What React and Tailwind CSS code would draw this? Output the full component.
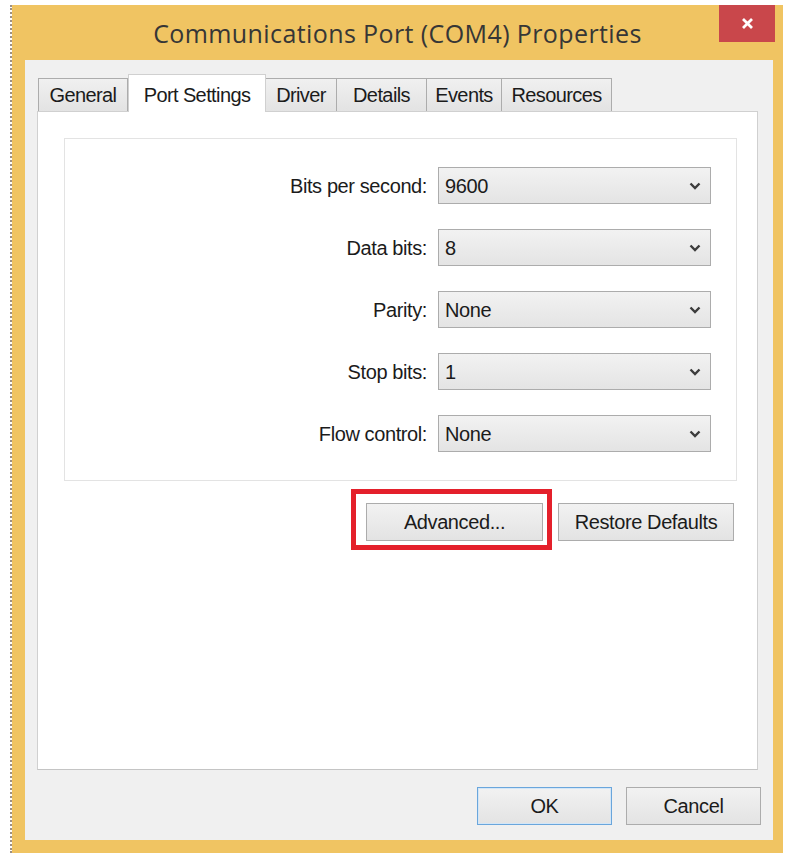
import React from 'react';

const tabs = [
  { name: 'General', w: 'w-[90px]' },
  { name: 'Port Settings', w: 'w-[138px]', active: true },
  { name: 'Driver', w: 'w-[72px]' },
  { name: 'Details', w: 'w-[91px]' },
  { name: 'Events', w: 'w-[76px]' },
  { name: 'Resources', w: 'w-[111px]' },
];

const settings = [
  { label: 'Bits per second:', value: '9600' },
  { label: 'Data bits:', value: '8' },
  { label: 'Parity:', value: 'None' },
  { label: 'Stop bits:', value: '1' },
  { label: 'Flow control:', value: 'None' },
];

const font = { fontFamily: '"Liberation Sans", Arial, sans-serif' };

function Chevron() {
  return (
    <svg width="12" height="8" viewBox="0 0 12 8" className="text-[#3c3c3c]">
      <polyline points="1.5,1.5 6,6 10.5,1.5" fill="none" stroke="currentColor" strokeWidth="2.4" />
    </svg>
  );
}

function Combo({ value }) {
  return (
    <div className="w-[273px] h-[37px] flex items-center justify-between pl-[6px] pr-[9px] border border-[#acacac] bg-gradient-to-b from-[#f2f2f2] to-[#e4e4e4] text-[20px] tracking-[-0.4px] text-[#1b1b1b]">
      <span>{value}</span>
      <Chevron />
    </div>
  );
}

function Button({ children, className = '', focused }) {
  return (
    <div
      className={`relative h-[38px] flex items-center justify-center border bg-gradient-to-b from-[#f2f2f2] to-[#e3e3e3] text-[20px] tracking-[-0.4px] text-[#1b1b1b] ${
        focused ? 'border-[#6aa6dc] shadow-[inset_0_0_0_1px_#d3e6f7]' : 'border-[#acacac]'
      } ${className}`}
    >
      {children}
    </div>
  );
}

export default function App() {
  return (
    <div className="w-[787px] h-[856px] bg-white flex pt-[5px]" style={font}>
      {/* strip of the desktop behind the dialog */}
      <div className="w-[10px]" />
      <div className="w-[2px] h-[848px] border-l-2 border-dotted border-[#9c8f84]" />

      <div className="w-[771px] h-[848px] bg-[#f0c462] flex flex-col">
        {/* title bar */}
        <div className="relative h-[55px] flex items-center justify-center">
          <span
            className="text-[25px] tracking-[0.4px] text-[#363636] pt-[2px]"
            style={{ fontFamily: '"Open Sans", "Noto Sans", sans-serif' }}
          >
            Communications Port (COM4) Properties
          </span>
          <div className="absolute top-0 right-[8px] w-[56px] h-[37px] bg-[#c9474b] flex items-center justify-center">
            <svg width="13" height="13" viewBox="0 0 13 13">
              <path d="M2 2 L11 11 M11 2 L2 11" stroke="#fff" strokeWidth="2.8" />
            </svg>
          </div>
        </div>

        {/* client area */}
        <div className="flex-1 ml-[13px] mr-[10px] mb-[13px] bg-[#f0f0f0] flex flex-col pt-[14px]">
          {/* tab strip */}
          <div className="flex items-end h-[37px] pl-[13px]">
            {tabs.map((t) =>
              t.active ? (
                <div
                  key={t.name}
                  className={`${t.w} h-[38px] -mb-px relative z-10 bg-white border border-b-0 border-[#d0d0d0] flex items-start justify-center pt-[5px] text-[20px] tracking-[-0.6px] text-[#1b1b1b]`}
                >
                  {t.name}
                </div>
              ) : (
                <div
                  key={t.name}
                  className={`${t.w} h-[33px] -ml-px first:ml-0 bg-gradient-to-b from-[#f0f0f0] to-[#e3e3e3] border border-b-0 border-[#acacac] flex items-center justify-center text-[20px] tracking-[-0.6px] text-[#1b1b1b]`}
                >
                  {t.name}
                </div>
              )
            )}
          </div>

          {/* tab page */}
          <div className="ml-[12px] w-[721px] h-[659px] bg-white border border-[#d0d0d0] border-b-[#c4c4c4]">
            <div className="mt-[26px] ml-[26px] w-[673px] border border-[#e3e3e3] pt-[28px] pb-[28px] pr-[25px] flex flex-col gap-[25px]">
              {settings.map((s) => (
                <div key={s.label} className="flex items-center justify-end gap-[11px]">
                  <span className="text-[20px] tracking-[-0.4px] text-[#1b1b1b]">{s.label}</span>
                  <Combo value={s.value} />
                </div>
              ))}
            </div>

            <div className="mt-[22px] flex justify-end gap-[15px] pr-[23px]">
              <Button className="w-[177px]">
                Advanced...
                <div className="absolute -left-[16px] -right-[10px] -top-[15px] -bottom-[10px] border-[5px] border-[#e4202b]" />
              </Button>
              <Button className="w-[176px]">Restore Defaults</Button>
            </div>
          </div>

          {/* dialog buttons */}
          <div className="mt-[17px] flex justify-end gap-[14px] pr-[12px]">
            <Button className="w-[135px]" focused>
              OK
            </Button>
            <Button className="w-[135px]">Cancel</Button>
          </div>
        </div>
      </div>
    </div>
  );
}
